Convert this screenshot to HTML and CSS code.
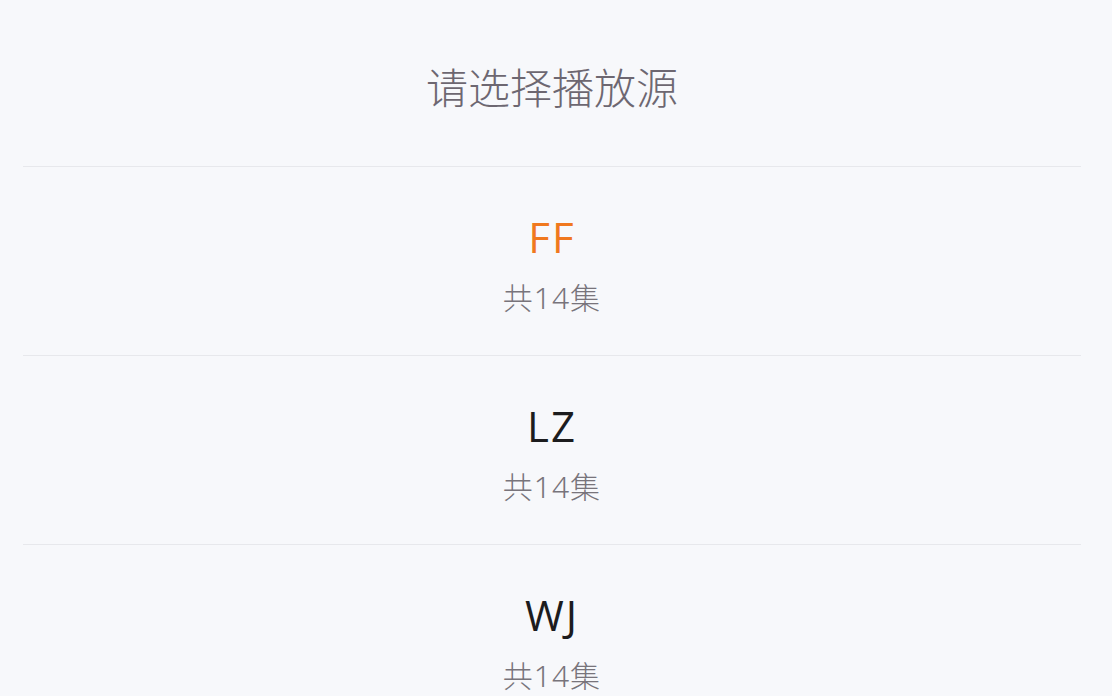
FILE: index.html
```html
<!DOCTYPE html>
<html lang="zh-CN">
<head>
    <meta charset="UTF-8"/>
    <meta name="viewport" content="width=device-width, initial-scale=1.0"/>
    <title>请选择播放源</title>
    <link rel="stylesheet" href="styles.css">
</head>
<body>
    <div class="sheet">
        <div class="sheet-title">请选择播放源</div>
        <ul class="source-list">
            <li class="source active">
                <div class="source-name">FF</div>
                <div class="source-count">共14集</div>
            </li>
            <li class="source">
                <div class="source-name">LZ</div>
                <div class="source-count">共14集</div>
            </li>
            <li class="source">
                <div class="source-name">WJ</div>
                <div class="source-count">共14集</div>
            </li>
        </ul>
    </div>
</body>
</html>
```

FILE: styles.css
```css
html, body {
    margin: 0;
    padding: 0;
    height: 100%;
    overflow: hidden;
}
body {
    font-family: "Noto Sans", "Noto Sans CJK SC", sans-serif;
    background: #f7f8fb;
    color: #1c1c1e;
}
.sheet {
    padding: 0 31px 0 23px;
}
.sheet-title {
    height: 167px;
    box-sizing: border-box;
    padding-top: 60px;
    line-height: 56px;
    font-size: 42px;
    font-weight: 300;
    text-align: center;
    color: #6d6771;
    border-bottom: 1px solid #e7e8ec;
}
.source-list {
    list-style: none;
    margin: 0;
    padding: 0;
}
.source {
    height: 189px;
    box-sizing: border-box;
    padding-top: 45px;
    text-align: center;
    border-bottom: 1px solid #e7e8ec;
}
.source-name {
    font-family: "Open Sans", "Noto Sans", sans-serif;
    font-size: 42px;
    line-height: 50px;
    letter-spacing: 2px;
    color: #1c1c1e;
}
.source.active .source-name {
    color: #f0781e;
}
.source-count {
    margin-top: 16px;
    font-size: 30px;
    font-weight: 300;
    line-height: 40px;
    letter-spacing: 1px;
    color: #78747b;
}
```
